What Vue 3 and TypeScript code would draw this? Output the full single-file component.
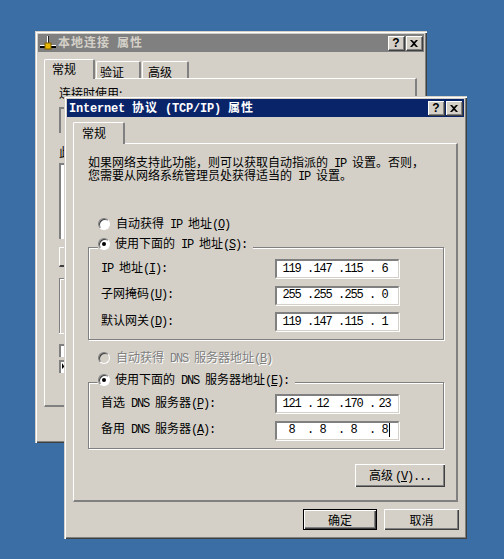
<script setup lang="ts">
interface FieldRow {
  pre: string
  lat: string
  post: string
  acc: string
  octets: string[]
}

const ipRows: FieldRow[] = [
  { pre: '', lat: 'IP ', post: '地址', acc: 'I', octets: ['119', '147', '115', '6'] },
  { pre: '子网掩码', lat: '', post: '', acc: 'U', octets: ['255', '255', '255', '0'] },
  { pre: '默认网关', lat: '', post: '', acc: 'D', octets: ['119', '147', '115', '1'] }
]

const dnsRows: FieldRow[] = [
  { pre: '首选', lat: ' DNS ', post: '服务器', acc: 'P', octets: ['121', '12', '170', '23'] },
  { pre: '备用', lat: ' DNS ', post: '服务器', acc: 'A', octets: ['8', '8', '8', '8'] }
]
</script>

<template>
  <div class="desktop">
    <!-- back window -->
    <section class="window back-window">
      <header class="titlebar inactive">
        <svg class="net-icon" width="16" height="16" viewBox="0 0 16 16">
          <rect x="7" y="1" width="1" height="9" fill="#fff" />
          <rect x="8" y="1" width="1" height="9" fill="#202020" />
          <rect x="0" y="10" width="16" height="1" fill="#fff" />
          <rect x="0" y="11" width="16" height="2" fill="#000" />
          <rect x="5" y="8" width="6" height="6" fill="#e8b800" stroke="#806000" stroke-width="1" />
        </svg>
        <span class="title-text">本地连接<span class="word-gap">属性</span></span>
        <div class="caption-btns">
          <button class="cap-btn">?</button>
          <button class="cap-btn">
            <svg width="8" height="7" viewBox="0 0 8 7"><path d="M0 0h2l2 2 2-2h2L5 3.500 8 7H6L4 5 2 7H0l3-3.500z" fill="#000" /></svg>
          </button>
        </div>
      </header>
      <nav class="tabs back-tabs">
        <div class="tab selected back-first">常规</div>
        <div class="tab back-second">验证</div>
        <div class="tab back-third">高级</div>
      </nav>
      <div class="panel back-panel">
        <p class="back-text">连接时使用:</p>
        <div class="sunken back-adapter"></div>
        <p class="back-text back-gap">此连接使用下列项目:</p>
        <div class="sunken back-list"></div>
        <div class="back-install"></div>
        <div class="back-desc"></div>
        <div class="back-check"></div>
        <div class="back-check checked">
          <svg width="8" height="8" viewBox="0 0 8 8"><path d="M1 1v6l2-2 2 2z" fill="#000" /></svg>
        </div>
      </div>
    </section>

    <!-- front window -->
    <section class="window front-window">
      <header class="titlebar">
        <span class="front-title"><span class="lat-bold">Internet </span>协议<span class="lat-bold"> (TCP/IP) </span>属性</span>
        <div class="caption-btns">
          <button class="cap-btn">?</button>
          <button class="cap-btn">
            <svg width="8" height="7" viewBox="0 0 8 7"><path d="M0 0h2l2 2 2-2h2L5 3.500 8 7H6L4 5 2 7H0l3-3.500z" fill="#000" /></svg>
          </button>
        </div>
      </header>
      <nav class="tabs front-tabs">
        <div class="tab selected front-first">常规</div>
      </nav>
      <div class="panel front-panel">
        <div class="intro">
          <div class="intro-line">如果网络支持此功能，则可以获取自动指派的<span class="lat"> IP </span>设置。否则，</div>
          <div class="intro-line">您需要从网络系统管理员处获得适当的<span class="lat"> IP </span>设置。</div>
        </div>

        <label class="radio-row first-radio">
          <span class="radio"></span>
          <span>自动获得<span class="lat"> IP </span>地址<span class="lat">(<u>O</u>)</span></span>
        </label>

        <div class="group ip-group">
          <label class="radio-row legend">
            <span class="radio on"></span>
            <span>使用下面的<span class="lat"> IP </span>地址<span class="lat">(<u>S</u>):</span></span>
          </label>
          <div v-for="row in ipRows" :key="row.acc" class="field-row">
            <span class="field-label">{{ row.pre }}<span class="lat">{{ row.lat }}</span>{{ row.post }}<span class="lat">(<u>{{ row.acc }}</u>):</span></span>
            <div class="ip-field">
              <template v-for="(octet, i) in row.octets" :key="i">
                <span class="octet lat">{{ octet }}</span>
                <span v-if="i < 3" class="dot lat">.</span>
              </template>
            </div>
          </div>
        </div>

        <label class="radio-row disabled third-radio">
          <span class="radio off"></span>
          <span>自动获得<span class="lat"> DNS </span>服务器地址<span class="lat">(<u>B</u>)</span></span>
        </label>

        <div class="group dns-group">
          <label class="radio-row legend">
            <span class="radio on"></span>
            <span>使用下面的<span class="lat"> DNS </span>服务器地址<span class="lat">(<u>E</u>):</span></span>
          </label>
          <div v-for="(row, r) in dnsRows" :key="row.acc" class="field-row">
            <span class="field-label">{{ row.pre }}<span class="lat">{{ row.lat }}</span>{{ row.post }}<span class="lat">(<u>{{ row.acc }}</u>):</span></span>
            <div class="ip-field">
              <template v-for="(octet, i) in row.octets" :key="i">
                <span class="octet lat">{{ octet }}<i v-if="r === 1 && i === 3" class="caret"></i></span>
                <span v-if="i < 3" class="dot lat">.</span>
              </template>
            </div>
          </div>
        </div>

        <div class="advanced-row">
          <button class="btn advanced">高级<span class="lat adv-key">(<u>V</u>)...</span></button>
        </div>
      </div>
      <footer class="footer">
        <button class="btn default">确定</button>
        <button class="btn">取消</button>
      </footer>
    </section>
  </div>
</template>

<style scoped>
.desktop {
  position: relative;
  width: 504px;
  height: 559px;
  overflow: hidden;
  background: #3a6ea5;
  font-family: "Noto Sans CJK SC", "Liberation Sans", sans-serif;
  font-size: 12px;
  line-height: 13px;
  color: #000;
}

.window {
  position: absolute;
  box-sizing: border-box;
  padding: 3px;
  display: flex;
  flex-direction: column;
  background: #d4d0c8;
  box-shadow: inset 1px 1px 0 #d4d0c8, inset 2px 2px 0 #fff, inset -1px -1px 0 #404040, inset -2px -2px 0 #808080;
}

.back-window {
  left: 35px;
  top: 31px;
  width: 392px;
  height: 412px;
}

.front-window {
  left: 64px;
  top: 96px;
  width: 403px;
  height: 443px;
}

.titlebar {
  flex: none;
  height: 18px;
  display: flex;
  align-items: center;
  padding: 0 2px;
  background: #0a246a;
  color: #fff;
  font-weight: 700;
}

.titlebar.inactive {
  background: #808080;
  color: #d4d0c8;
}

.net-icon {
  flex: none;
  margin-right: 2px;
}

.title-text,
.front-title {
  letter-spacing: 1px;
  white-space: nowrap;
}

.title-text {
  margin-bottom: 3px;
}

.word-gap {
  margin-left: 7px;
}

.lat,
.lat-bold {
  font-family: "Liberation Mono", monospace;
  white-space: pre;
}

.lat {
  letter-spacing: -1.2px;
}

.lat-bold {
  font-weight: 700;
  letter-spacing: -0.2px;
}

.caption-btns {
  margin-left: auto;
  display: flex;
  gap: 2px;
}

.cap-btn {
  width: 16px;
  height: 14px;
  padding: 0;
  border: 0;
  display: flex;
  align-items: center;
  justify-content: center;
  background: #d4d0c8;
  font: 700 12px "Liberation Sans", sans-serif;
  color: #000;
  box-shadow: inset 1px 1px 0 #fff, inset -1px -1px 0 #808080, 1px 1px 0 #404040;
}

.tabs {
  flex: none;
  display: flex;
  align-items: flex-end;
  position: relative;
  z-index: 1;
}

.tab {
  box-sizing: border-box;
  height: 17px;
  padding-top: 3px;
  background: #d4d0c8;
  border-top: 1px solid #fff;
  border-left: 1px solid #fff;
  border-right: 2px solid #808080;
  border-radius: 2px 2px 0 0;
}

.tab.selected {
  margin-bottom: -1px;
}

.back-tabs {
  margin: 7px 0 0 6px;
  gap: 1px;
}

.back-first {
  width: 51px;
  height: 20px;
  padding: 2px 0 0 7px;
}

.back-second {
  width: 45px;
  padding-left: 3px;
}

.back-third {
  width: 47px;
  padding-left: 5px;
}

.front-tabs {
  margin: 5px 0 0 6px;
}

.front-first {
  width: 52px;
  height: 22px;
  padding-left: 8px;
}

.panel {
  box-sizing: border-box;
  background: #d4d0c8;
  border-top: 1px solid #fff;
  border-left: 1px solid #fff;
  border-right: 2px solid #808080;
  border-bottom: 2px solid #808080;
}

.back-panel {
  margin-left: 6px;
  width: 373px;
  height: 329px;
  padding: 7px 0 0 14px;
}

.back-text {
  margin: 0;
}

.back-gap {
  margin-top: 12px;
}

.sunken {
  box-sizing: border-box;
  width: 300px;
  background: #fff;
  border-top: 2px solid #808080;
  border-left: 2px solid #808080;
}

.back-adapter {
  height: 26px;
  margin-top: 8px;
  background: #d4d0c8;
}

.back-list {
  height: 76px;
  margin-top: 5px;
}

.back-install {
  box-sizing: border-box;
  width: 120px;
  height: 20px;
  margin-top: 8px;
  border-top: 1px solid #fff;
  border-left: 1px solid #fff;
  border-bottom: 2px solid #404040;
}

.back-desc {
  box-sizing: border-box;
  width: 300px;
  height: 55px;
  margin-top: 11px;
  border-top: 1px solid #808080;
  border-left: 1px solid #808080;
  box-shadow: inset 1px 1px 0 #fff, 0 1px 0 #fff;
}

.back-check {
  box-sizing: border-box;
  display: flex;
  width: 13px;
  height: 13px;
  margin-top: 11px;
  background: #fff;
  border-top: 2px solid #808080;
  border-left: 2px solid #808080;
}

.back-check.checked {
  margin-top: 3px;
}

.front-panel {
  margin-left: 6px;
  width: 385px;
  height: 359px;
  padding: 11px 13px 0 14px;
}

.intro {
  height: 26px;
  white-space: nowrap;
}

.intro-line {
  height: 13px;
}

.radio-row {
  display: flex;
  align-items: center;
  gap: 6px;
  height: 14px;
  white-space: nowrap;
}

.radio {
  flex: none;
  box-sizing: border-box;
  position: relative;
  width: 12px;
  height: 12px;
  border-radius: 50%;
  background: #fff;
  border: 1px solid;
  border-color: #808080 #fff #fff #808080;
  box-shadow: inset 1px 1px 0 #404040, 0 0 0 1px #d4d0c8;
}

.radio.on::after {
  content: "";
  position: absolute;
  left: 3px;
  top: 3px;
  width: 4px;
  height: 4px;
  border-radius: 50%;
  background: #000;
}

.radio.off {
  background: #d4d0c8;
}

.first-radio {
  margin: 36px 0 0 10px;
}

.third-radio {
  margin: 11px 0 0 10px;
}

.disabled {
  color: #808080;
  text-shadow: 1px 1px 0 #fff;
}

.group {
  position: relative;
  box-sizing: border-box;
  width: 356px;
  padding: 11px 44px 0 12px;
  border: 1px solid #808080;
  box-shadow: inset 1px 1px 0 #fff, 1px 1px 0 #fff;
}

.ip-group {
  height: 93px;
  margin-top: 16px;
}

.dns-group {
  height: 67px;
  margin-top: 17px;
}

.legend {
  position: absolute;
  left: 9px;
  top: -13px;
  padding-right: 6px;
  background: #d4d0c8;
  height: 20px;
  gap: 5px;
}

.ip-group .legend {
  top: -14px;
}

.field-row {
  display: flex;
  align-items: center;
  justify-content: space-between;
  height: 19px;
  margin-bottom: 7.5px;
}

.field-label {
  white-space: nowrap;
  margin-bottom: 2px;
}

.ip-field {
  box-sizing: border-box;
  width: 124px;
  height: 19px;
  display: flex;
  align-items: center;
  padding-left: 1px;
  background: #fff;
  border-top: 2px solid #808080;
  border-left: 2px solid #808080;
  border-bottom: 1px solid #d4d0c8;
  border-right: 1px solid #d4d0c8;
  box-shadow: 1px 1px 0 #fff;
}

.octet {
  position: relative;
  flex: none;
  width: 27px;
  text-align: center;
}

.dot {
  flex: none;
  width: 4px;
  margin: 0 -2px 0 2px;
  text-align: right;
}

.caret {
  position: absolute;
  left: 18px;
  top: -1px;
  width: 1px;
  height: 14px;
  background: #000;
}

.advanced-row {
  display: flex;
  justify-content: flex-end;
  margin: 15px -2px 0 0;
}

.adv-key {
  margin-left: 2px;
}

.btn {
  box-sizing: border-box;
  width: 75px;
  height: 21px;
  padding: 0;
  border: 0;
  background: #d4d0c8;
  color: #000;
  font: inherit;
  line-height: 13px;
  white-space: nowrap;
  box-shadow: inset 1px 1px 0 #fff, inset -1px -1px 0 #404040, inset -2px -2px 0 #808080;
}

.advanced {
  width: 90px;
  height: 23px;
}

.default {
  width: 74px;
  outline: 1px solid #000;
  outline-offset: -1px;
  box-shadow: inset 2px 2px 0 #fff, inset -2px -2px 0 #404040, inset -3px -3px 0 #808080;
}

.footer {
  display: flex;
  justify-content: flex-end;
  gap: 7px;
  margin-top: 7px;
  padding-right: 5px;
}
</style>

<style>
html,
body {
  margin: 0;
  background: #3a6ea5;
}
</style>
